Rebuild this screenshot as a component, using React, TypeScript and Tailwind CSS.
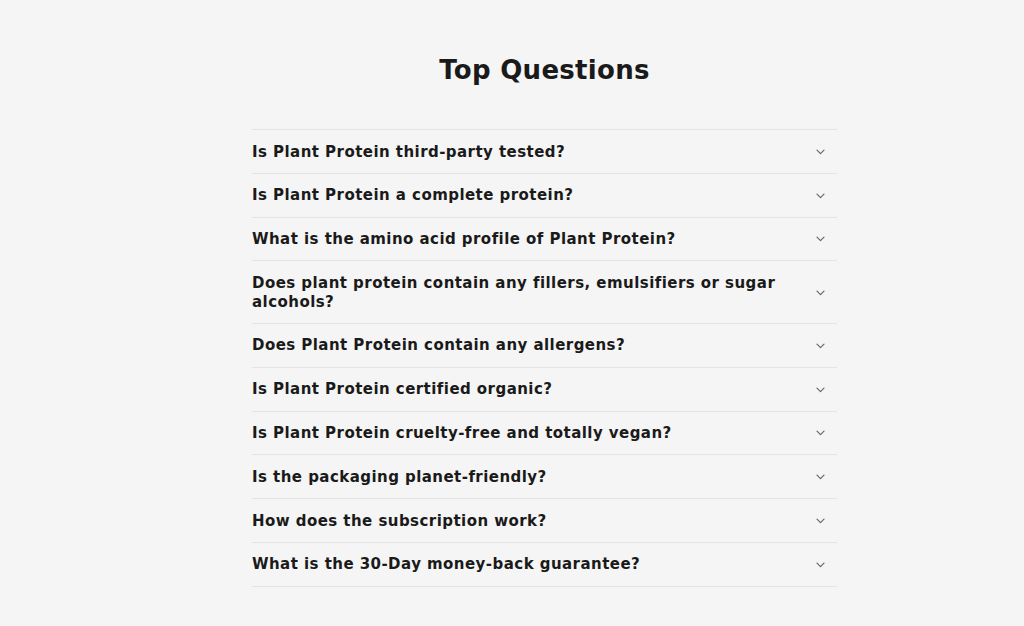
import React from "react";

const questions = [
  "Is Plant Protein third-party tested?",
  "Is Plant Protein a complete protein?",
  "What is the amino acid profile of Plant Protein?",
  "Does plant protein contain any fillers, emulsifiers or sugar alcohols?",
  "Does Plant Protein contain any allergens?",
  "Is Plant Protein certified organic?",
  "Is Plant Protein cruelty-free and totally vegan?",
  "Is the packaging planet-friendly?",
  "How does the subscription work?",
  "What is the 30-Day money-back guarantee?",
];

function Chevron() {
  return (
    <svg width="9" height="6" viewBox="0 0 9 6" fill="none" className="shrink-0">
      <path d="M1 1.2l3.5 3.5 3.5-3.5" stroke="#666" strokeWidth="1.2" strokeLinecap="round" strokeLinejoin="round" />
    </svg>
  );
}

export default function App() {
  return (
    <div
      className="min-h-[626px] w-full bg-[#f5f5f5] text-[#1a1a1a] flex justify-center pl-[65px]"
      style={{ fontFamily: '"DejaVu Sans", "Liberation Sans", sans-serif' }}
    >
      <div className="w-[585px] pt-[52px]">
        <h2 className="text-center text-[26px] leading-[36px] font-bold tracking-[0.3px]">Top Questions</h2>
        <div className="mt-[41px] border-t border-[#e4e4e4]">
          {questions.map((q) => (
            <div key={q} className="flex items-center justify-between border-b border-[#e4e4e4] pt-[12.5px] pb-[11.5px]">
              <span className="text-[15px] leading-[18.8px] font-bold tracking-[0.45px] pr-[40px]">{q}</span>
              <div className="pr-[12px]">
                <Chevron />
              </div>
            </div>
          ))}
        </div>
      </div>
    </div>
  );
}
